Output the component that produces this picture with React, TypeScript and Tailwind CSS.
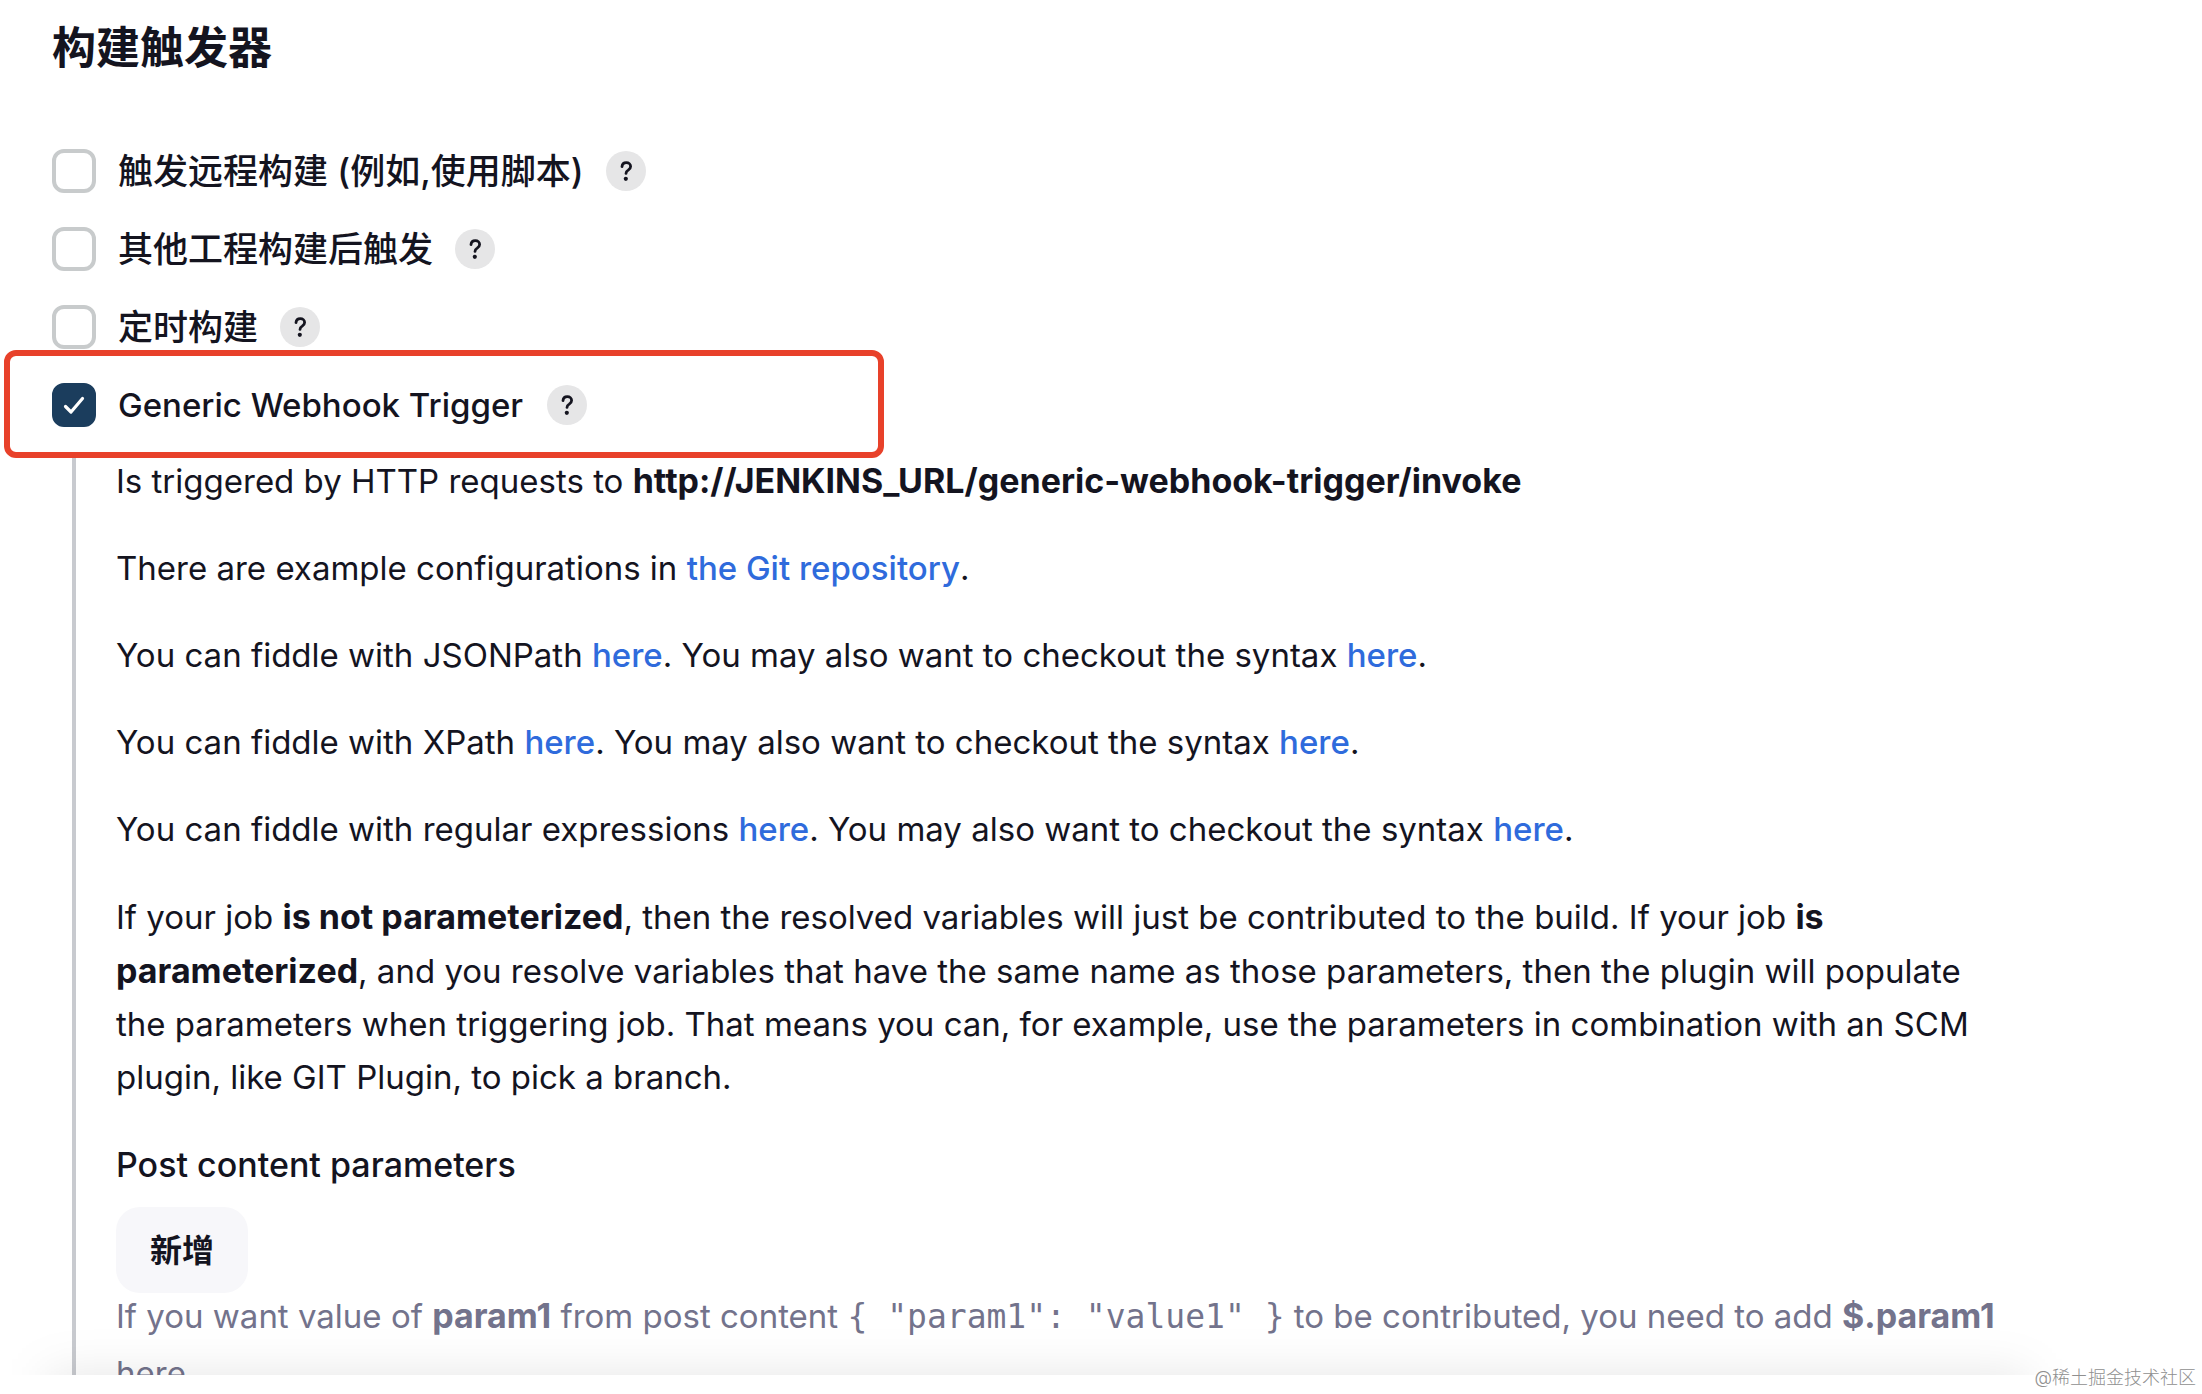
import { FC, ReactNode, useState } from 'react';
import clsx from 'clsx';

const HelpButton: FC<{ label: string }> = ({ label }) => (
  <button
    type="button"
    aria-label={`Help: ${label}`}
    className="flex items-center justify-center size-10 rounded-full bg-[#e6e6e7]"
  >
    <svg viewBox="0 0 40 40" className="size-10" fill="none" aria-hidden="true">
      <path
        d="M16 15.600c.2-2.400 1.900-4 4.300-4 2.500 0 4.300 1.600 4.300 3.800 0 1.700-.9 2.700-2.400 3.700-1.600 1-2.200 1.700-2.200 3.300"
        stroke="#14141f"
        strokeWidth="2.8"
        strokeLinecap="round"
        strokeLinejoin="round"
      />
      <circle cx="19.800" cy="27.800" r="2.100" fill="#14141f" />
    </svg>
  </button>
);

const Trigger: FC<{
  id: string;
  label: string;
  latin?: boolean;
  defaultChecked?: boolean;
  highlighted?: boolean;
}> = ({ id, label, latin, defaultChecked = false, highlighted = false }) => {
  const [checked, setChecked] = useState(defaultChecked);

  return (
    <div className="relative flex items-center h-[78px]">
      <span className="relative flex size-11">
        <input
          id={id}
          type="checkbox"
          checked={checked}
          onChange={(e) => setChecked(e.target.checked)}
          className="size-11 appearance-none rounded-xl border-4 border-[#c8cbcc] bg-white checked:border-[#1b3d5d] checked:bg-[#1b3d5d]"
        />
        {checked && (
          <svg
            viewBox="0 0 44 44"
            className="absolute inset-0 pointer-events-none"
            fill="none"
            aria-hidden="true"
          >
            <path
              d="M13.500 23.500l5.500 5.500 11.500-13.500"
              stroke="white"
              strokeWidth="3.2"
              strokeLinecap="round"
              strokeLinejoin="round"
            />
          </svg>
        )}
      </span>
      <label
        htmlFor={id}
        className={clsx(
          'pl-[22px] font-medium',
          latin ? 'pr-6 text-[33px]' : 'pr-[22px] text-[35px]'
        )}
      >
        {label}
      </label>
      <HelpButton label={label} />
      {highlighted && (
        <span className="absolute -left-12 -top-4 h-[108px] w-[880px] rounded-xl border-6 border-[#e8412a] pointer-events-none" />
      )}
    </div>
  );
};

const Link: FC<{ children: ReactNode }> = ({ children }) => (
  <a href="#" className="font-medium text-[#2f6bdc]">
    {children}
  </a>
);

const Strong: FC<{ children: ReactNode }> = ({ children }) => (
  <b className="text-[34px] font-bold">{children}</b>
);

const Fiddle: FC<{ subject: string }> = ({ subject }) => (
  <p>
    You can fiddle with {subject} <Link>here</Link>. You may also want to
    checkout the syntax <Link>here</Link>.
  </p>
);

const triggers = [
  { id: 'remote', label: '触发远程构建 (例如,使用脚本)' },
  { id: 'upstream', label: '其他工程构建后触发' },
  { id: 'timer', label: '定时构建' },
  {
    id: 'webhook',
    label: 'Generic Webhook Trigger',
    latin: true,
    defaultChecked: true,
    highlighted: true,
  },
];

export default function App() {
  return (
    <div className="flex flex-col h-screen overflow-hidden bg-white text-[33px] leading-[53px] text-[#14141f] font-[Inter,'Noto_Sans_CJK_SC',sans-serif]">
      <main className="relative flex-1 min-h-0 overflow-hidden pl-[52px] pr-[186px] pt-5">
        <h1 className="text-[44px] leading-[56px] font-bold">构建触发器</h1>

        <form className="pt-14">
          {triggers.map((trigger) => (
            <Trigger key={trigger.id} {...trigger} />
          ))}

          <section className="ml-5 mt-2.5 flex flex-col gap-[34px] border-l-4 border-[#c8cacf] pl-10">
            <p>
              Is triggered by HTTP requests to{' '}
              <Strong>http://JENKINS_URL/generic-webhook-trigger/invoke</Strong>
            </p>
            <p>
              There are example configurations in{' '}
              <Link>the Git repository</Link>.
            </p>
            <Fiddle subject="JSONPath" />
            <Fiddle subject="XPath" />
            <Fiddle subject="regular expressions" />
            <p>
              If your job <Strong>is not parameterized</Strong>, then the
              resolved variables will just be contributed to the build. If your
              job <Strong>is parameterized</Strong>, and you resolve variables
              that have the same name as those parameters, then the plugin will
              populate the parameters when triggering job. That means you can,
              for example, use the parameters in combination with an SCM plugin,
              like GIT Plugin, to pick a branch.
            </p>
            <div>
              <h2 className="text-[34px] font-medium">
                Post content parameters
              </h2>
              <button
                type="button"
                className="mt-4 block h-[86px] rounded-3xl bg-[#f7f7fa] px-[34px] text-[32px] font-bold"
              >
                新增
              </button>
              <p className="-mt-1.5 leading-[57px] text-[#73738c]">
                If you want value of <Strong>param1</Strong> from post content{' '}
                <code className="whitespace-pre text-[33px] font-['DejaVu_Sans_Mono',monospace]">
                  {'{ "param1": "value1" }'}
                </code>{' '}
                to be contributed, you need to add <Strong>$.param1</Strong>{' '}
                here.
              </p>
            </div>
          </section>
        </form>

        {/* shadow cast by the sticky bottom bar */}
        <div className="absolute left-12 right-44 -bottom-16 h-16 bg-black/10 blur-xl pointer-events-none" />
      </main>

      <footer className="relative h-[19px] bg-white">
        <span className="absolute right-1.5 bottom-1 text-[18px] leading-6 font-light text-[#8f8f8f]">
          @稀土掘金技术社区
        </span>
      </footer>
    </div>
  );
}
